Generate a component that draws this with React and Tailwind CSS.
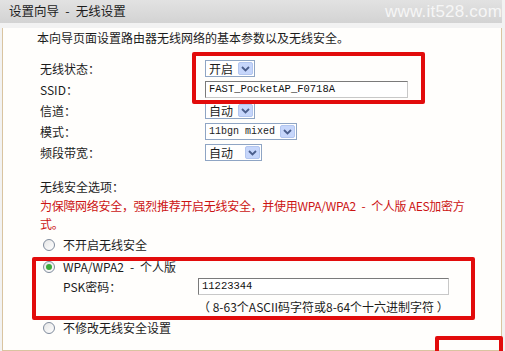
import React from "react";

const Arrow = () => (
  <div className="h-[13px] w-[15px] flex items-center justify-center bg-[#c6d6fb] border border-[#b3c6ef] rounded-[2px]">
    <svg width="9" height="6" viewBox="0 0 9 6">
      <path d="M1 1 L4.5 4.5 L8 1" fill="none" stroke="#4a5e8c" strokeWidth="1.8" />
    </svg>
  </div>
);

const Select = ({ value, width, mono }) => (
  <div
    className="h-[17px] flex items-center justify-between bg-white border border-[#8fa5c4] pl-[3px] pr-[1px]"
    style={{ width }}
  >
    <span className={mono ? "font-['Liberation_Mono',monospace] text-[10px] leading-none" : "text-[12px] leading-none"}>
      {value}
    </span>
    <Arrow />
  </div>
);

const TextInput = ({ value, width }) => (
  <div
    className="h-[17px] flex items-center bg-white border border-[#7a7a7a] border-b-[#c8c8c8] border-r-[#c8c8c8] pl-[3px]"
    style={{ width }}
  >
    <span className="font-['Liberation_Mono',monospace] text-[10.5px] leading-none text-[#111]">{value}</span>
  </div>
);

const Radio = ({ checked, label }) => (
  <div className="h-[22px] flex items-center pl-[40px] gap-[8px]">
    <div className="w-[12px] h-[12px] rounded-full border border-[#7f8b9c] bg-gradient-to-br from-[#e6e6e6] to-white flex items-center justify-center">
      {checked && <div className="w-[6px] h-[6px] rounded-full bg-[#3caa3c]" />}
    </div>
    <span>{label}</span>
  </div>
);

const Row = ({ label, children }) => (
  <div className="h-[21px] flex items-center pl-[37px]">
    <span className="w-[165px]">{label}</span>
    {children}
  </div>
);

export default function App() {
  return (
    <div className="relative w-[505px] h-[351px] overflow-hidden bg-[#f2f2f2] text-[12px] text-[#1c1c1c] font-['Noto_Sans_CJK_SC','Liberation_Sans',sans-serif]">
      {/* header */}
      <div className="h-[23px] w-[502px] flex items-center justify-between bg-gradient-to-b from-[#e2e2e2] to-[#d3d3d3]">
        <span className="pl-[9px] text-[12.5px] leading-none">设置向导{"\u2002-\u2002"}无线设置</span>
        <span className="font-['Liberation_Sans',sans-serif] text-[17px] leading-none text-[#f6f6f6] tracking-[0.2px]">
          www.it528.com
        </span>
      </div>

      {/* body */}
      <div className="ml-[2px] w-[500px] h-[323px] bg-[#fffefc] border-x border-b border-[#d9c4a0]">
        <div className="h-[20px] mt-[5px] flex items-center pl-[34px]">
          本向导页面设置路由器无线网络的基本参数以及无线安全。
        </div>

        <div className="mt-[10px]">
          <Row label="无线状态：">
            <Select value="开启" width={50} />
          </Row>
          <Row label="SSID：">
            <TextInput value="FAST_PocketAP_F0718A" width={203} />
          </Row>
          <Row label="信道：">
            <Select value="自动" width={50} />
          </Row>
          <Row label="模式：">
            <Select value="11bgn mixed" width={92} mono />
          </Row>
          <Row label="频段带宽：">
            <Select value="自动" width={57} />
          </Row>
        </div>

        <div className="h-[20px] mt-[14px] flex items-center pl-[37px]">无线安全选项：</div>
        <div className="pl-[37px] text-[#cc1414] leading-[18px] tracking-[-0.3px]">
          为保障网络安全，强烈推荐开启无线安全，并使用WPA/WPA2{"\u2002-\u2002"}个人版 AES加密方
          <br />
          式。
        </div>

        <div className="mt-[1px]">
          <Radio label="不开启无线安全" />
          <Radio checked label={"WPA/WPA2\u2002-\u2002个人版"} />
          <div className="h-[17px] flex items-center pl-[60px]">
            <span className="w-[135px]">PSK密码：</span>
            <TextInput value="11223344" width={251} />
          </div>
          <div className="h-[20px] mt-[2px] flex items-center pl-[195px]">
            （ 8-63个ASCII码字符或8-64个十六进制字符 ）
          </div>
          <Radio label="不修改无线安全设置" />
        </div>
      </div>

      {/* red annotation boxes */}
      <div className="absolute left-[192px] top-[52px] w-[233px] h-[52px] border-[4px] border-[#e20c0c] rounded-[2px]" />
      <div className="absolute left-[32px] top-[257px] w-[443px] h-[63px] border-[4px] border-[#e20c0c] rounded-[2px]" />
      <div className="absolute left-[435px] top-[336px] w-[68px] h-[30px] border-[4px] border-[#e20c0c] rounded-[2px]" />
    </div>
  );
}
